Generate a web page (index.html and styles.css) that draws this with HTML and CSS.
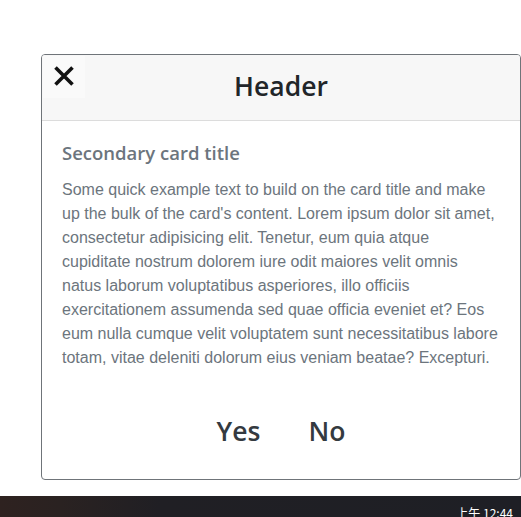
FILE: index.html
```html
<!DOCTYPE html>
<html lang="en">
<head>
<meta charset="utf-8">
<title>Card</title>
<link rel="stylesheet" href="styles.css">
</head>
<body>
<div class="page">
  <div class="card">
    <div class="card-header">
      <button class="close" aria-label="Close">
        <svg width="20" height="20" viewBox="0 0 20 20"><path d="M1.5 1.5 L18.5 18.5 M18.5 1.5 L1.5 18.5" stroke="#111" stroke-width="3.6" fill="none"/></svg>
      </button>
      <h2 class="header-title">Header</h2>
    </div>
    <div class="card-body">
      <h5 class="card-title">Secondary card title</h5>
      <p class="card-text">Some quick example text to build on the card title and make up the bulk of the card's content. Lorem ipsum dolor sit amet, consectetur adipisicing elit. Tenetur, eum quia atque cupiditate nostrum dolorem iure odit maiores velit omnis natus laborum voluptatibus asperiores, illo officiis exercitationem assumenda sed quae officia eveniet et? Eos eum nulla cumque velit voluptatem sunt necessitatibus labore totam, vitae deleniti dolorum eius veniam beatae? Excepturi.</p>
      <div class="actions">
        <button class="btn">Yes</button>
        <button class="btn">No</button>
      </div>
    </div>
  </div>
</div>
<div class="taskbar">
  <span class="clock">上午 12:44</span>
</div>
</body>
</html>
```
FILE: styles.css
```css
html, body {
  margin: 0;
  padding: 0;
  background: #fff;
  overflow: hidden;
}
body {
  font-family: "Open Sans", "Noto Sans", "Noto Sans CJK SC", sans-serif;
  height: 517px;
  position: relative;
}
.page {
  padding: 54px 0 0 41px;
}
.card {
  width: 478px;
  border: 1px solid #6f7479;
  border-radius: 4px;
  background: #fff;
  overflow: hidden;
}
.card-header {
  position: relative;
  background: #f7f7f7;
  border-bottom: 1px solid #dcdcdc;
  height: 65px;
  display: flex;
  align-items: center;
  justify-content: center;
}
.close {
  position: absolute;
  left: 1px;
  top: 1px;
  width: 42px;
  height: 42px;
  border: 0;
  padding: 0;
  background: #fafafa;
  display: flex;
  align-items: center;
  justify-content: center;
  cursor: pointer;
}
.close svg {
  display: block;
  margin-left: -1px;
  margin-top: -2px;
}
.header-title {
  margin: 0;
  font-size: 26.5px;
  font-weight: 600;
  color: #212529;
  line-height: 1.2;
  padding-bottom: 1px;
}
.card-body {
  padding: 20px 20px 24px 20px;
}
.card-title {
  margin: 0 0 12px 0;
  font-size: 18.5px;
  font-weight: 600;
  line-height: 24px;
  color: #6c757d;
}
.card-text {
  margin: 0;
  padding-top: 1px;
  font-family: "Liberation Sans", Arial, sans-serif;
  font-size: 16px;
  line-height: 24px;
  color: #6c757d;
}
.actions {
  margin-top: 37px;
  height: 48px;
  display: flex;
  justify-content: center;
  align-items: center;
  gap: 24px;
}
.btn {
  border: 0;
  background: transparent;
  font-family: inherit;
  font-size: 26.5px;
  font-weight: 600;
  color: #343a40;
  padding: 0 12px;
  line-height: 48px;
  cursor: pointer;
}
.taskbar {
  position: absolute;
  left: 0;
  top: 496px;
  width: 100%;
  height: 40px;
  background: linear-gradient(to right, #2e2220 0px, #2a2221 60px, #201f24 160px, #1e1f25 100%);
}
.clock {
  position: absolute;
  right: 8px;
  top: 9px;
  font-family: "Noto Sans CJK SC", "Noto Sans", sans-serif;
  font-size: 12px;
  line-height: 16px;
  color: #fff;
}
```
